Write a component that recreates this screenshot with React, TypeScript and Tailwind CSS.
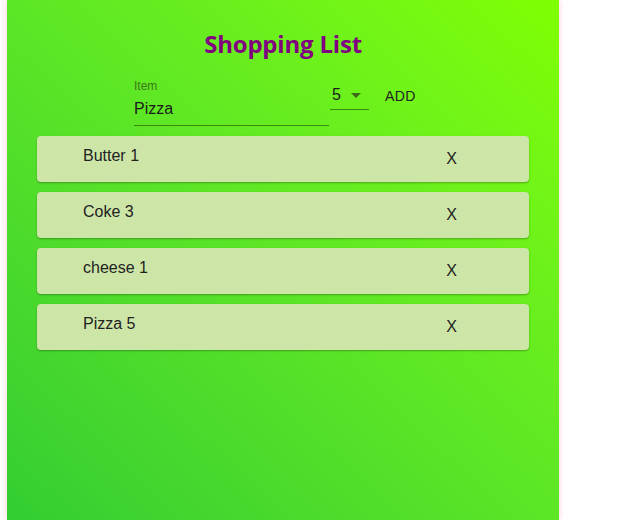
const items = [
  { name: "Butter", qty: 1 },
  { name: "Coke", qty: 3 },
  { name: "cheese", qty: 1 },
  { name: "Pizza", qty: 5 },
];

export default function App() {
  return (
    <div className="min-h-[520px] bg-white font-['Liberation_Sans',Arial,sans-serif]">
      <div className="ml-[7px] w-[552px] min-h-[520px] bg-gradient-to-tr from-[#32cd32] to-[#7fff00] shadow-[0_0_6px_rgba(255,120,150,0.4)] pt-[29px]">
        <h1 className="text-center text-[24px] leading-[30px] font-bold text-[#800080] font-['Open_Sans',sans-serif] tracking-[-0.2px]">
          Shopping List
        </h1>

        {/* form */}
        <div className="flex items-start pl-[127px] mt-[20px]">
          <div className="w-[195px] border-b border-[#3a8a10]">
            <div className="text-[12px] leading-[14px] text-[#3a7a18]">Item</div>
            <div className="text-[16px] leading-[19px] text-[#1a1a1a] mt-[6px] pb-[7px]">Pizza</div>
          </div>
          <div className="ml-[1px] mt-[6px] w-[39px] h-[25px] border-b border-[#3a8a10] flex items-start">
            <span className="ml-[2px] text-[16px] leading-[20px] text-[#1a1a1a]">5</span>
            <svg className="ml-[10px] mt-[8px]" width="10" height="5" viewBox="0 0 10 5">
              <path d="M0 0 L10 0 L5 5 Z" fill="#3f6a1a" />
            </svg>
          </div>
          <button className="ml-[16px] mt-[9px] text-[14px] leading-[16px] text-[#222] tracking-[0.4px]">ADD</button>
        </div>

        {/* list */}
        <div className="mx-[30px] mt-[10px] flex flex-col gap-[10px]">
          {items.map((it) => (
            <div
              key={it.name}
              className="h-[46px] rounded-[4px] bg-[#cde6a8] shadow-[0_1px_2px_rgba(0,0,0,0.3)] flex justify-between pl-[46px] pr-[72px]"
            >
              <span className="mt-[11px] text-[16px] leading-[18px] text-[#222]">
                {it.name} {it.qty}
              </span>
              <span className="mt-[14px] text-[16px] leading-[18px] text-[#222]">X</span>
            </div>
          ))}
        </div>
      </div>
    </div>
  );
}
